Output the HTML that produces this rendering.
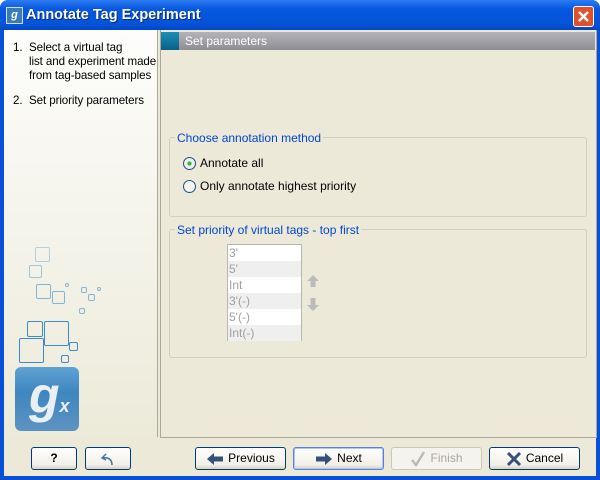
<!DOCTYPE html><html><head><style>
body{margin:0;width:600px;height:480px;overflow:hidden;font-family:"Liberation Sans",sans-serif;font-size:11px}
.win{position:absolute;left:0;top:0;width:600px;height:480px;background:#0a4fd8;border-radius:8px 8px 0 0}
.tb{position:absolute;left:0;top:0;width:600px;height:30px;background:linear-gradient(#2d7cf2,#0758e0 30%,#0553d8 80%,#0346c4);border-radius:8px 8px 0 0}
.tt{position:absolute;left:26px;top:7px;color:#fff;font-weight:bold;font-size:14.5px;text-shadow:1px 1px #0a2a80}
.client{position:absolute;left:4px;top:30px;width:592px;height:446px;background:#ece9d8}
.left{position:absolute;left:4px;top:30px;width:153px;height:407px;background:linear-gradient(#fdfdfb,#ecead9);border-right:1px solid #aca899}
.right{position:absolute;left:160px;top:30px;width:435px;height:407px;border-left:1px solid #aca899;border-right:1px solid #aca899;border-bottom:1px solid #aca899;background:#ece9d8}
.hdr{position:absolute;left:161px;top:32px;width:434px;height:18px;background:linear-gradient(#b4b3b8,#8f8e94)}
.hdr i{position:absolute;left:0;top:0;width:18px;height:18px;background:linear-gradient(#1b8fb5,#0a6088)}
.hdr span{position:absolute;left:24px;top:2px;color:#fff;font-size:12px}
.gb{position:absolute;border:1px solid #d0d0bf;border-radius:3px}
.gl{position:absolute;background:#ece9d8;color:#0046d5;padding:0 2px;font-size:12px}
.btn{position:absolute;top:447px;height:21px;border:1px solid #003c74;border-radius:3px;background:linear-gradient(#fff,#f1efe6 80%,#d8d2c2);line-height:21px;font-size:12px;display:flex;align-items:center;justify-content:center;gap:4px}
.row{height:16px;line-height:16px;color:#a0a0a0;padding-left:1px;font-size:12px}
.sq{position:absolute;border:1px solid #3d8cc8;border-radius:2px}
.t{font-size:12px}
</style></head><body>
<div class="win"></div>
<div class="tb"></div>
<div style="position:absolute;left:6px;top:7px;width:15px;height:15px;background:#3a7cb8;border:1px solid #cde;color:#fff;font-weight:bold;font-style:italic;font-size:11px;line-height:14px;text-align:center">g</div>
<div class="tt">Annotate Tag Experiment</div>
<div style="position:absolute;left:573px;top:6px;width:19px;height:19px;border:1px solid #fff;border-radius:3px;background:#e0502c"><svg width="19" height="19"><path d="M5 5L14 14M14 5L5 14" stroke="#fff" stroke-width="2.5"/></svg></div>
<div class="client"></div>
<div class="left"></div>
<div style="position:absolute;left:13px;top:41px;line-height:14px;color:#000;font-size:11.6px;letter-spacing:-0.1px">
<div style="display:flex"><span style="width:16px">1.</span><span>Select a virtual tag<br>list and experiment made<br>from tag-based samples</span></div>
<div style="display:flex;margin-top:11px"><span style="width:16px">2.</span><span>Set priority parameters</span></div></div>
<div class="sq" style="left:35px;top:247px;width:13px;height:13px;opacity:.35"></div>
<div class="sq" style="left:29px;top:265px;width:11px;height:11px;opacity:.45"></div>
<div class="sq" style="left:36px;top:284px;width:13px;height:13px;opacity:.6"></div>
<div class="sq" style="left:52px;top:291px;width:11px;height:11px;opacity:.6"></div>
<div class="sq" style="left:65px;top:283px;width:2px;height:2px;opacity:.6"></div>
<div class="sq" style="left:81px;top:287px;width:4px;height:4px;opacity:.6"></div>
<div class="sq" style="left:88px;top:294px;width:5px;height:5px;opacity:.6"></div>
<div class="sq" style="left:97px;top:287px;width:2px;height:2px;opacity:.6"></div>
<div class="sq" style="left:79px;top:308px;width:4px;height:4px;opacity:.6"></div>
<div class="sq" style="left:27px;top:321px;width:14px;height:14px"></div>
<div class="sq" style="left:44px;top:321px;width:23px;height:23px"></div>
<div class="sq" style="left:19px;top:338px;width:23px;height:23px"></div>
<div class="sq" style="left:69px;top:342px;width:7px;height:7px"></div>
<div class="sq" style="left:61px;top:355px;width:6px;height:6px"></div>
<div style="position:absolute;left:15px;top:367px;width:64px;height:64px;border-radius:6px;background:linear-gradient(#5fa3d3,#3f86bf 40%,#5d93c0);color:#e8f0f6;font:italic bold 50px 'Liberation Sans',sans-serif;line-height:56px;text-indent:14px">g<span style="font-size:18px">x</span></div>
<div class="right"></div>
<div class="hdr"><i></i><span>Set parameters</span></div>
<div class="gb" style="left:169px;top:137px;width:416px;height:78px"></div>
<div class="gl" style="left:175px;top:131px">Choose annotation method</div>
<div style="position:absolute;left:183px;top:157px;width:11px;height:11px;border:1px solid #1c5180;border-radius:50%;background:radial-gradient(#3cb63c 25%,#eee 30%)"></div>
<div class="t" style="position:absolute;left:200px;top:156px">Annotate all</div>
<div style="position:absolute;left:183px;top:180px;width:11px;height:11px;border:1px solid #1c5180;border-radius:50%;background:#f4f4f0"></div>
<div class="t" style="position:absolute;left:200px;top:179px">Only annotate highest priority</div>
<div class="gb" style="left:169px;top:229px;width:416px;height:127px"></div>
<div class="gl" style="left:175px;top:223px">Set priority of virtual tags - top first</div>
<div style="position:absolute;left:227px;top:244px;width:73px;height:95px;border:1px solid #b8b8b0;background:#fff">
<div class="row">3'</div><div class="row" style="background:#efefef">5'</div><div class="row">Int</div><div class="row" style="background:#efefef">3'(-)</div><div class="row">5'(-)</div><div class="row" style="background:#efefef">Int(-)</div></div>
<svg style="position:absolute;left:306px;top:274px" width="14" height="40"><path d="M7 1L13 7H9.5V13H4.5V7H1Z" fill="#bbb"/><path d="M7 37L13 31H9.5V24H4.5V31H1Z" fill="#bbb"/></svg>
<div class="btn" style="left:31px;width:44px;font-weight:bold">?</div>
<div class="btn" style="left:85px;width:44px"><svg width="16" height="16"><path d="M6 3L2 7L6 9M3 7C9 6 12 9 12 14" fill="none" stroke="#4a6fb0" stroke-width="1.5"/></svg></div>
<div class="btn" style="left:195px;width:89px"><svg width="18" height="14"><path d="M1 7L8 1V4.5H17V9.5H8V13Z" fill="#36507a"/></svg>Previous</div>
<div class="btn" style="left:293px;width:89px;border-color:#5a7edc;box-shadow:inset 0 0 0 1px #b0c8f0"><svg width="18" height="14"><path d="M17 7L10 1V4.5H1V9.5H10V13Z" fill="#36507a"/></svg>Next</div>
<div class="btn" style="left:391px;width:89px;border-color:#cac8bb;background:#f4f3ee;color:#aca899"><svg width="16" height="16"><path d="M2 9L6 14L14 1" fill="none" stroke="#bbb" stroke-width="2.5"/></svg>Finish</div>
<div class="btn" style="left:489px;width:89px"><svg width="16" height="16"><path d="M2 2L14 14M14 2L2 14" stroke="#36507a" stroke-width="3"/></svg>Cancel</div>
</body></html>
